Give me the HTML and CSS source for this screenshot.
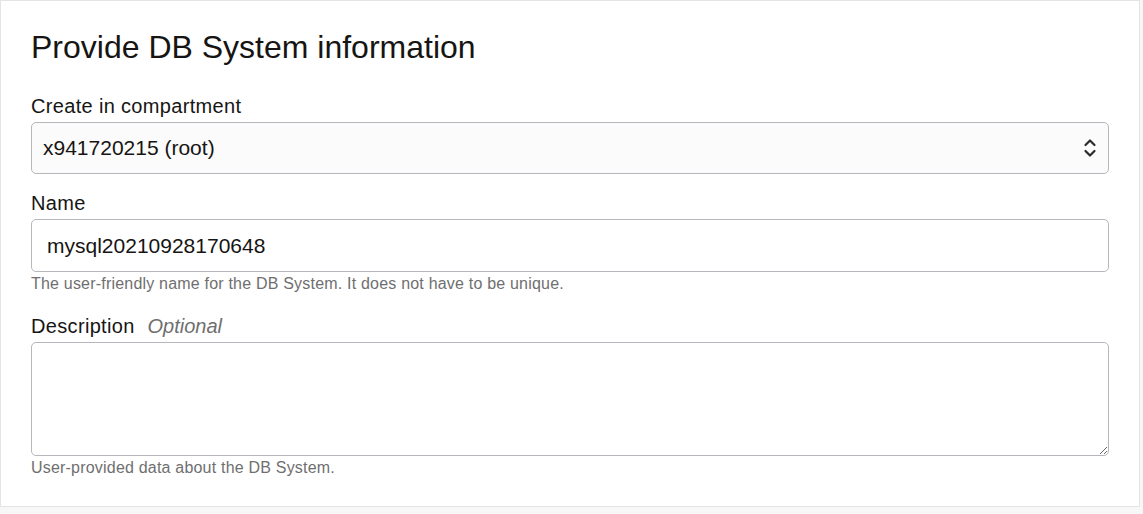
FILE: index.html
```html
<!DOCTYPE html>
<html lang="en">
<head>
<meta charset="utf-8">
<title>Provide DB System information</title>
<link rel="stylesheet" href="styles.css">
</head>
<body>
<section class="panel">
  <h2 class="title">Provide DB System information</h2>

  <div class="field field-compartment">
    <label class="label">Create in compartment</label>
    <div class="select">
      <span class="select-value">x941720215 (root)</span>
      <svg class="chevrons" width="14" height="22" viewBox="0 0 14 22" aria-hidden="true">
        <path d="M2.5 8 L7 3.5 L11.5 8" fill="none" stroke="#2b2b2b" stroke-width="2.2" stroke-linecap="round" stroke-linejoin="round"/>
        <path d="M2.5 14 L7 18.5 L11.5 14" fill="none" stroke="#2b2b2b" stroke-width="2.2" stroke-linecap="round" stroke-linejoin="round"/>
      </svg>
    </div>
  </div>

  <div class="field field-name">
    <label class="label">Name</label>
    <input class="input" type="text" value="mysql20210928170648">
    <div class="help">The user-friendly name for the DB System. It does not have to be unique.</div>
  </div>

  <div class="field field-desc">
    <label class="label">Description <span class="optional">Optional</span></label>
    <textarea class="textarea"></textarea>
    <div class="help">User-provided data about the DB System.</div>
  </div>
</section>
</body>
</html>
```

FILE: styles.css
```css
html, body {
  margin: 0;
  padding: 0;
}
body {
  background: #f7f7f7;
  font-family: "Liberation Sans", Arial, sans-serif;
  color: #161513;
  height: 514px;
  overflow: hidden;
}
.panel {
  box-sizing: border-box;
  width: 1140px;
  height: 507px;
  background: #ffffff;
  border: 1px solid #e4e4e4;
  padding: 28px 30px 0 30px;
}
.title {
  margin: 0;
  font-size: 32px;
  font-weight: normal;
  line-height: 36px;
}
.field {
  display: flex;
  flex-direction: column;
}
.field-compartment { margin-top: 29px; }
.field-name { margin-top: 17px; }
.field-desc { margin-top: 20px; }
.label {
  font-size: 20px;
  letter-spacing: 0.33px;
  line-height: 25px;
  margin-bottom: 3px;
}
.optional {
  font-style: italic;
  color: #6f6f6f;
  margin-left: 7px;
  letter-spacing: 0;
}
.select {
  box-sizing: border-box;
  height: 52px;
  border: 1px solid #b7b6bc;
  border-radius: 5px;
  background: #fbfbfb;
  display: flex;
  align-items: center;
  justify-content: space-between;
  padding: 0 11px 0 11px;
  font-size: 21px;
}
.chevrons { display: block; }
.input {
  box-sizing: border-box;
  height: 53px;
  width: 100%;
  margin: 0;
  border: 1px solid #b7b6bc;
  border-radius: 5px;
  background: #ffffff;
  padding: 0 15px;
  font-family: "Liberation Sans", Arial, sans-serif;
  font-size: 21px;
  color: #161513;
  outline: none;
}
.textarea {
  box-sizing: border-box;
  height: 114px;
  width: 100%;
  margin: 0;
  border: 1px solid #b7b6bc;
  border-radius: 5px;
  background: #ffffff;
  padding: 12px 15px;
  font-family: "Liberation Sans", Arial, sans-serif;
  font-size: 20px;
  outline: none;
  display: block;
}
.help {
  font-size: 16px;
  letter-spacing: 0.2px;
  line-height: 20px;
  color: #6f6f6f;
  margin-top: 2px;
}
```
